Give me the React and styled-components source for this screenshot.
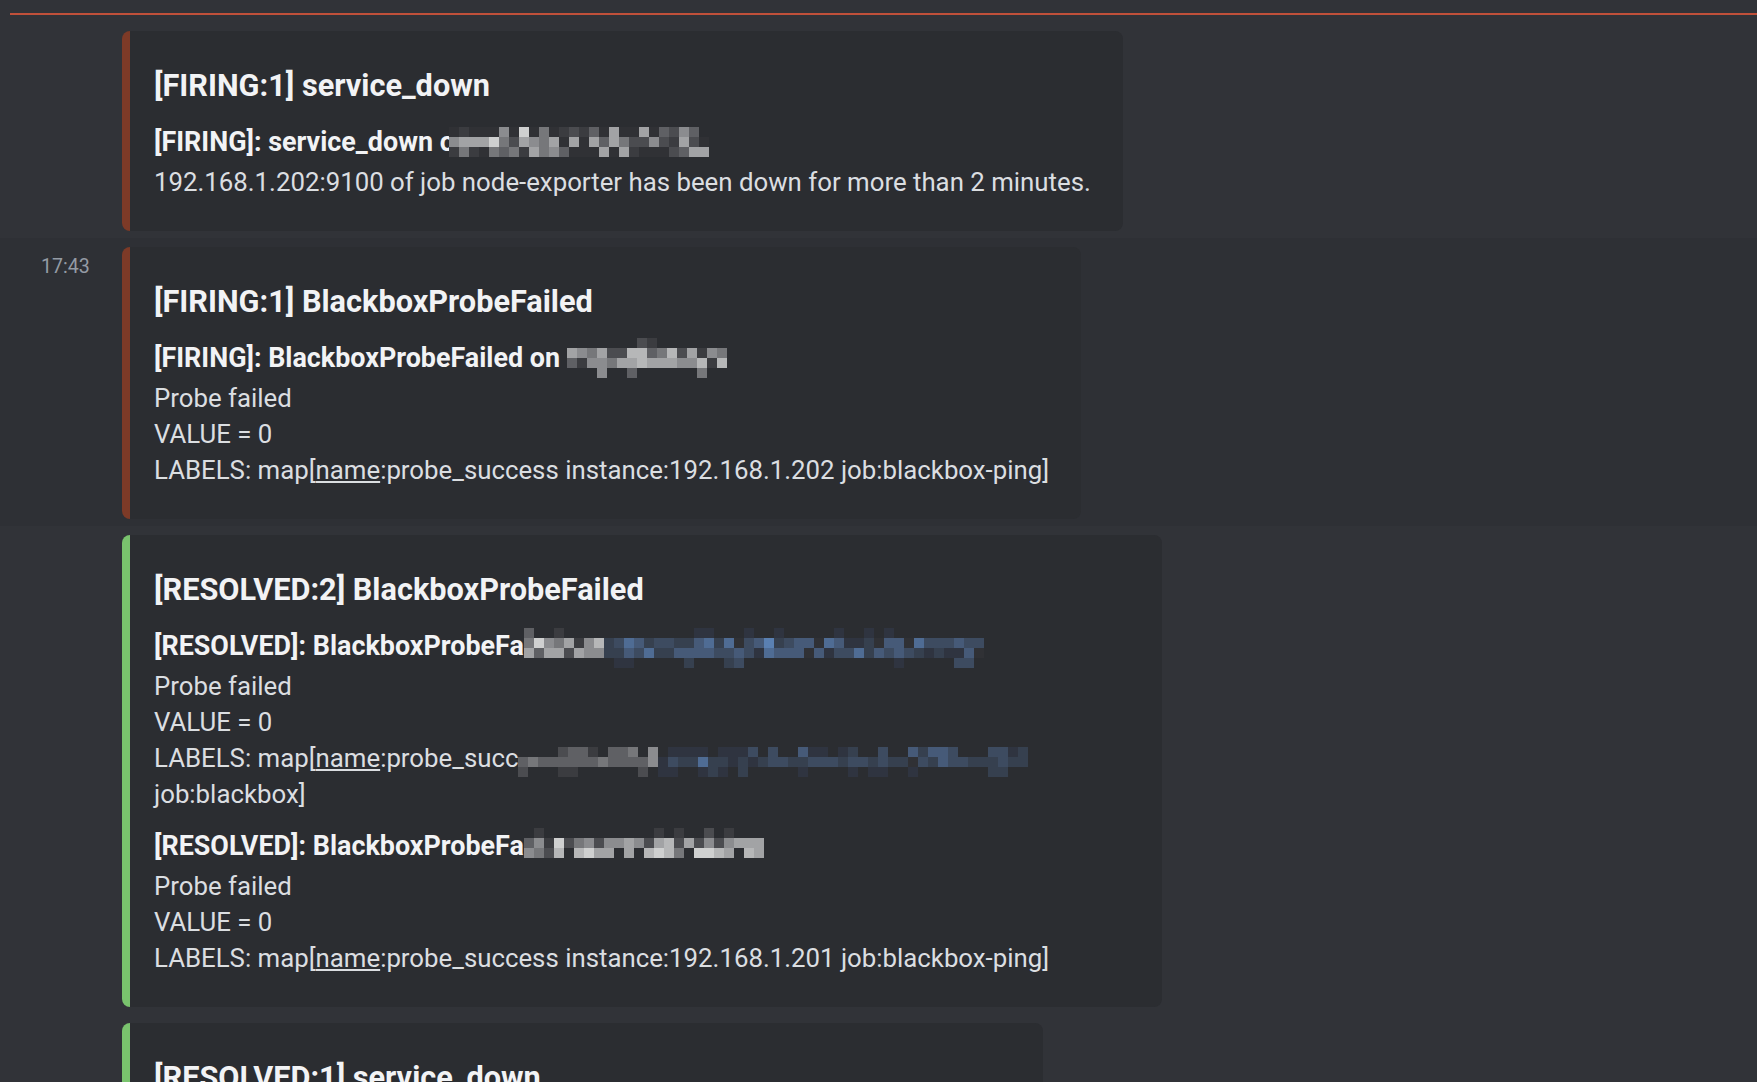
import React from "react";
import styled, { createGlobalStyle } from "styled-components";

const RED = "#7d3a27";
const GREEN = "#79c36d";

const GlobalStyle = createGlobalStyle`
  html, body {
    margin: 0;
    padding: 0;
    background: #313338;
  }
  body {
    font-family: Roboto, "Liberation Sans", sans-serif;
    overflow: hidden;
  }
`;

const Chat = styled.main`
  height: 1082px;
  padding-top: 13px;
  box-sizing: border-box;
  overflow: hidden;
  background: #313338;
`;

const NewDivider = styled.div`
  height: 2px;
  margin: 0 0 7px 10px;
  background: #c0503a;
`;

const Message = styled.section`
  display: flex;
  padding: 9px 0 7px;
  background: ${(p) => (p.$hovered ? "#2e3035" : "transparent")};
`;

const Gutter = styled.div`
  width: 122px;
  flex-shrink: 0;
  box-sizing: border-box;
  padding-left: 41px;
`;

const Timestamp = styled.time`
  display: block;
  margin-top: 2px;
  font-size: 19.6px;
  line-height: 36px;
  color: #949ba4;
`;

const Embed = styled.article`
  box-sizing: border-box;
  max-width: 1040px;
  background: #2b2d31;
  border-left: 8px solid ${(p) => p.$color};
  border-radius: 8px;
  padding: 17px 32px 31px 24px;
`;

const EmbedTitle = styled.h2`
  margin: 16px 0 0;
  font-size: 30.7px;
  line-height: 44px;
  font-weight: 700;
  color: #f2f3f5;
`;

const Field = styled.div`
  margin-top: 16px;
`;

const FieldName = styled.div`
  margin-bottom: 4px;
  font-size: 26.9px;
  line-height: 36px;
  font-weight: 700;
  color: #f2f3f5;
  white-space: nowrap;
`;

const FieldValue = styled.div`
  font-size: 25.8px;
  line-height: 36px;
  color: #dbdee1;
`;

const Under = styled.span`
  text-decoration: underline;
`;

const CensorSlot = styled.span`
  position: relative;
  display: inline-block;
  vertical-align: top;
  width: ${(p) => p.$w}px;
  height: 36px;
  margin-left: ${(p) => p.$shift || 0}px;
`;

const CensorArt = styled.svg`
  position: absolute;
  left: 0;
  top: ${(p) => p.$top}px;
`;

const PALETTE = {
  "0": "#303135",
  "1": "#3b3c40",
  "2": "#4b4c50",
  "3": "#5f6064",
  "4": "#76777a",
  "5": "#8b8c8f",
  "6": "#a2a3a5",
  "7": "#b6b7b8",
  "8": "#cfd0d0",
  "9": "#e4e4e4",
  a: "#2f3440",
  b: "#36404f",
  c: "#3d4b60",
  d: "#465a78",
  e: "#4f6c94",
  f: "#5a80b2",
};

const CELL = 10;

// pixelated blur that hides host names in the alerts
const Censor = ({ rows, top = 0, shift = 0 }) => {
  const cols = rows[0].length;
  return (
    <CensorSlot $w={cols * CELL} $shift={shift}>
      <CensorArt $top={top} width={cols * CELL} height={rows.length * CELL}>
        {rows.map((row, y) =>
          row.split("").map((ch, x) =>
            PALETTE[ch] ? (
              <rect key={`${x}-${y}`} x={x * CELL} y={y * CELL} width={CELL} height={CELL} fill={PALETTE[ch]} />
            ) : null
          )
        )}
      </CensorArt>
    </CensorSlot>
  );
};

const HOST_A = [
  "0100050804012130600603253.",
  "56668426546060636422521620",
  "14104341645300060610002366",
];

const HOST_B = [
  ".......21.......",
  "6546227734726154",
  "3155466766655717",
  "...5..3......4..",
];

const RESOLVED_A = [
  "3..1.............aa...a..a.....a..a.a.........",
  "48546157bcedbccbbdebe0cdfbcdd0edaab0dd0ecccdcc",
  "63662655bbdcebbddddccdcaeddd0daccebdcdcbabaad0",
  ".........aa.....b...bc...............a.....cc.",
];

const LABELS_A = [
  "....2331.334.5.aaaa.aaac.c..daa.ab..c..dbddc...ccab",
  "34333333433335acbbebbababccbbcccbccbcbb0cbdccbbbcbb",
  "2...11......2.aa..aba.b.....a....a.aa..a.......bb..",
];

const RESOLVED_B = [
  ".1...........1.1..2.1...",
  "351824525565267262525666",
  "5427.7866.6.7874.8876.76",
];

const App = () => (
  <>
    <GlobalStyle />
    <Chat>
      <NewDivider />
      <Message>
        <Gutter />
        <Embed $color={RED}>
          <EmbedTitle>[FIRING:1] service_down</EmbedTitle>
          <Field>
            <FieldName>
              [FIRING]: service_down o
              <Censor rows={HOST_A} top={3} shift={-6} />
            </FieldName>
            <FieldValue>192.168.1.202:9100 of job node-exporter has been down for more than 2 minutes.</FieldValue>
          </Field>
        </Embed>
      </Message>
      <Message $hovered>
        <Gutter>
          <Timestamp>17:43</Timestamp>
        </Gutter>
        <Embed $color={RED}>
          <EmbedTitle>[FIRING:1] BlackboxProbeFailed</EmbedTitle>
          <Field>
            <FieldName>
              [FIRING]: BlackboxProbeFailed on <Censor rows={HOST_B} top={-2} />
            </FieldName>
            <FieldValue>
              <div>Probe failed</div>
              <div>VALUE = 0</div>
              <div>
                LABELS: map[<Under>name</Under>:probe_success instance:192.168.1.202 job:blackbox-ping]
              </div>
            </FieldValue>
          </Field>
        </Embed>
      </Message>
      <Message>
        <Gutter />
        <Embed $color={GREEN}>
          <EmbedTitle>[RESOLVED:2] BlackboxProbeFailed</EmbedTitle>
          <Field>
            <FieldName>
              [RESOLVED]: BlackboxProbeFa
              <Censor rows={RESOLVED_A} />
            </FieldName>
            <FieldValue>
              <div>Probe failed</div>
              <div>VALUE = 0</div>
              <div>
                LABELS: map[<Under>name</Under>:probe_succ
                <Censor rows={LABELS_A} top={7} /> job:blackbox]
              </div>
            </FieldValue>
          </Field>
          <Field>
            <FieldName>
              [RESOLVED]: BlackboxProbeFa
              <Censor rows={RESOLVED_B} />
            </FieldName>
            <FieldValue>
              <div>Probe failed</div>
              <div>VALUE = 0</div>
              <div>
                LABELS: map[<Under>name</Under>:probe_success instance:192.168.1.201 job:blackbox-ping]
              </div>
            </FieldValue>
          </Field>
        </Embed>
      </Message>
      <Message>
        <Gutter />
        <Embed $color={GREEN}>
          <EmbedTitle>[RESOLVED:1] service_down</EmbedTitle>
          <Field>
            <FieldName>
              [RESOLVED]: service_down o
              <Censor rows={LABELS_A} top={7} shift={2} />
            </FieldName>
            <FieldValue>Service is up again.</FieldValue>
          </Field>
        </Embed>
      </Message>
    </Chat>
  </>
);

export default App;
